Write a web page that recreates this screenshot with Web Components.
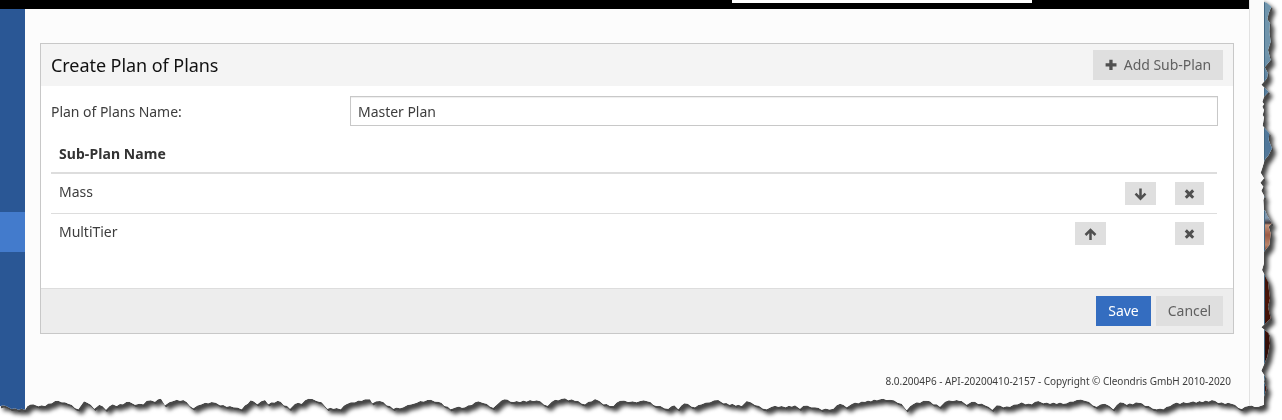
<!DOCTYPE html>
<html lang="en">
<head>
<meta charset="utf-8">
<title>Create Plan of Plans</title>
<style>
html,body{margin:0;background:#fff;overflow:hidden}
body{font:14px/20px "Noto Sans","Open Sans",sans-serif;color:#3d3d3d;letter-spacing:-.03px}
</style>
</head>
<body>
<torn-page>
  <side-nav slot="nav"></side-nav>
  <top-bar slot="top"></top-bar>
  <plan-panel>
    <span slot="title">Create Plan of Plans</span>
    <ui-button slot="action" icon="plus">Add Sub-Plan</ui-button>
    <form-row label="Plan of Plans Name:" value="Master Plan"></form-row>
    <plan-table>
      <plan-row move="down">Mass</plan-row>
      <plan-row move="up">MultiTier</plan-row>
    </plan-table>
    <ui-button slot="footer" primary>Save</ui-button>
    <ui-button slot="footer">Cancel</ui-button>
  </plan-panel>
  <span slot="version">8.0.2004P6 - API-20200410-2157 - Copyright © Cleondris GmbH 2010-2020</span>
</torn-page>
<script>
const define = (name, html, setup) => customElements.define(name, class extends HTMLElement {
  connectedCallback() {
    if (this.shadowRoot) return;
    const t = document.createElement('template');
    t.innerHTML = html;
    this.attachShadow({mode: 'open'}).append(t.content.cloneNode(true));
    if (setup) setup(this, this.shadowRoot);
  }
});

// Outline of the paper: lower edge in thirds of a pixel, one list per origin.
const bottom = [
 [0,370,'0,109 18,108 35,117 75,119 82,109 100,103 115,109 135,108 165,93 185,97 205,101 235,118 252,94 262,98 283,116 298,104 318,119 338,103 350,108 388,95 405,104 430,103 440,92 465,95 483,86 495,106 520,93 550,90 580,115 605,103 635,96 660,106 700,112 725,118 752,91 772,103 795,90 805,103 833,92 870,116 885,101 905,101 925,86 950,93 965,97'],
 [320,370,'22,116 50,114 62,118 80,102 105,97 135,88 150,88 157,100 180,93 220,116 250,112 275,103 290,98 322,90 355,95 392,118 408,112 435,112 455,105 475,94 490,99 520,113 535,100 553,88 580,96 650,91 683,107 695,95 725,86 765,92 795,103 825,87 850,103 880,108 900,92 925,96 950,97'],
 [640,370,'0,93 22,94 50,108 85,116 103,106 115,118 133,100 165,112 185,103 210,97 235,90 250,100 305,108 320,93 345,105 380,118 395,110 425,108 437,112 465,106 480,116 490,107 525,112 545,119 580,116 600,101 620,112 635,102 675,95 720,88 750,89 785,101 800,121 820,102 860,92 900,110 915,95 950,90'],
 [960,370,'0,93 5,93 20,104 35,95 75,106 97,119 110,106 130,112 150,110 185,97 197,103 215,103 235,93 250,100 320,100 350,90 375,92 410,110 435,101 460,118 480,97 500,104 537,98 555,107 590,118 610,118 640,101 690,97 765,92 775,99 815,101 845,117 865,108 895,110 910,105']
];
const right = [
 [1242,0,'66,0 66,6 74,8 88,20 80,40 76,58 84,70 82,95 86,125 78,150 86,180 68,202 78,220 75,235 58,254 80,275 66,290 61,306 66,312 61,320 66,330 62,345 66,352 62,377 82,400 80,420 90,445 80,465 68,480 62,500 56,518 66,535 55,548 64,560 58,572 68,590 64,600 66,630'],
 [1242,210,'70,2 75,15 90,40 80,50 86,70 82,105 66,125 66,160 60,180 68,195 78,215 80,235 84,265 78,290 86,325 58,352 80,370 84,400 76,440 58,482 70,500 66,515 74,535 66,560 66,585']
];
const points = lists => lists.flatMap(([ox, oy, s]) => s.split(' ').map(p => {
  const [x, y] = p.split(',').map(Number);
  return [ox + x / 3, oy + y / 3];
}));
// Fine teeth along the lower edge.
const roughen = pts => pts.flatMap((p, i) => {
  const q = pts[i + 1];
  if (!q) return [p];
  const out = [p], n = Math.floor((q[0] - p[0]) / 3);
  for (let k = 1; k < n; k++) {
    const f = k / n;
    out.push([p[0] + (q[0] - p[0]) * f, p[1] + (q[1] - p[1]) * f + (k % 2 ? -.8 : .5)]);
  }
  return out;
});

define('torn-page', `<style>
:host{display:block;width:1282px;height:420px;filter:drop-shadow(1px 2px 0 #484848) drop-shadow(3px 3px 2px rgba(0,0,0,.75))}
.paper{display:grid;grid-template-columns:25px 1224px 15px 18px;height:420px;background:#fcfcfc}
main{display:flex;flex-direction:column;background:#fcfcfc}
.content{padding:34px 15px 0}
.edge{background:#fafafa;border-left:1px solid #e2e2e2}
.photo{background:linear-gradient(#7095ad 0,#7094ab 55px,#587f9f 85px,#4f7699 145px,#65829b 205px,#8298ae 218px,#453a3c 223px,#c39279 225px,#9b5b45 235px,#b98368 245px,#743b2b 252px,#321009 260px,#4a1408 300px,#2b0c08 360px,#481107 400px);border-left:1px solid #426985;box-sizing:border-box}
.version{font-size:10px;line-height:14px;text-align:right;padding:40px 18px 0 0}
</style><div class="paper"><slot name="nav"></slot><main><slot name="top"></slot><div class="content"><slot></slot></div><div class="version"><slot name="version"></slot></div></main><div class="edge"></div><div class="photo"></div></div>`,
(el, root) => {
  const outline = [[0, 0], ...points(right), ...roughen(points(bottom)).reverse()];
  root.querySelector('.paper').style.clipPath = 'polygon(' + outline.map(p => p.map(v => v.toFixed(2) + 'px').join(' ')).join(',') + ')';
});

define('side-nav', `<style>
:host{display:flex;flex-direction:column;background:#2a5795}
.cap{height:9px;background:#000}.gap{height:203px}.on{height:40px;background:#437bcc}
</style><div class="cap"></div><div class="gap"></div><div class="on"></div>`);

define('top-bar', `<style>
:host{display:flex;height:9px;background:#000;padding-left:707px}
div{width:300px;height:3px;background:#fff}
</style><div></div>`);

define('plan-panel', `<style>
:host{display:flex;flex-direction:column;border:1px solid #c8c8c8;background:#fff;height:289px}
header{display:flex;align-items:center;justify-content:space-between;height:42px;background:#f4f4f4;padding:0 10px;font-size:18px;color:#111;letter-spacing:-.06px}
.body{flex:1;padding:10px 15px 0 10px}
footer{display:flex;gap:5px;justify-content:flex-end;align-items:center;height:44px;background:#ededed;border-top:1px solid #ddd;padding:0 10px}
</style><header><slot name="title"></slot><slot name="action"></slot></header><div class="body"><slot></slot></div><footer><slot name="footer"></slot></footer>`);

const icons = {
  plus: '<path d="M4.300 .8h3.300v3.500h3.900v3.200H7.600v3.600H4.300V7.500H.6V4.300h3.700z"/>',
  down: '<path d="M6.500 .5v10M1.500 5.700l5 5 5-5" fill="none" stroke="currentColor" stroke-width="2.500"/>',
  up: '<path d="M6.500 12V2M1.500 7l5-5 5 5" fill="none" stroke="currentColor" stroke-width="2.500"/>',
  remove: '<path d="M2.800 2.400l7.400 7.400M10.200 2.400l-7.400 7.400" fill="none" stroke="currentColor" stroke-width="3"/>'
};

define('ui-button', `<style>
:host{display:inline-flex;align-items:center;justify-content:center;box-sizing:border-box;height:30px;width:67px;background:#dfdfdf;color:#606060;font-size:14px;line-height:20px;letter-spacing:-.03px}
:host([primary]){background:#346dc0;color:#fff;width:55px}
:host([icon]){width:130px}
svg{width:12px;height:12px;margin-right:7px;fill:#505050}
</style><slot></slot>`, (el, root) => {
  const name = el.getAttribute('icon');
  if (name) root.querySelector('slot').insertAdjacentHTML('beforebegin', `<svg viewBox="0 0 12 12">${icons[name]}</svg>`);
});

define('icon-button', `<style>
:host{display:flex;align-items:center;justify-content:center;height:23px;width:31px;background:#dfdfdf;color:#505050}
:host([icon=remove]){width:29px}
svg{width:13px;height:13px;margin-top:1px}
</style><svg viewBox="0 0 13 13"></svg>`, (el, root) => {
  root.querySelector('svg').innerHTML = icons[el.getAttribute('icon')];
});

define('form-row', `<style>
:host{display:grid;grid-template-columns:299px 1fr;align-items:center}
label{padding-top:2px}
input{box-sizing:border-box;width:868px;height:30px;border:1px solid #c8c8c8;box-shadow:inset 0 1px 1px #eee;border-radius:0;padding:0 7px;font:inherit;letter-spacing:inherit;color:inherit;background:#fff}
</style><label></label><input>`, (el, root) => {
  root.querySelector('label').textContent = el.getAttribute('label');
  root.querySelector('input').value = el.getAttribute('value');
});

define('plan-table', `<style>
:host{display:block;width:1166px;margin-top:8px}
.head{height:38px;line-height:40px;padding-left:8px;font-weight:700;letter-spacing:.07px;border-bottom:2px solid #ddd;color:#333}
::slotted(:not(:first-child)){border-top:1px solid #ddd}
</style><div class="head">Sub-Plan Name</div><slot></slot>`);

define('plan-row', `<style>
:host{display:grid;grid-template-columns:1fr 50px 50px 42px;height:39px;padding-left:8px}
.name{padding-top:8px}
icon-button{margin-top:8px}
.up{grid-column:2}.down{grid-column:3}.remove{grid-column:4}
.name,icon-button{grid-row:1}
</style><div class="name"><slot></slot></div>`, (el, root) => {
  for (const kind of [el.getAttribute('move'), 'remove']) {
    const b = document.createElement('icon-button');
    b.setAttribute('icon', kind);
    b.className = kind;
    root.append(b);
  }
});
</script>
</body>
</html>
